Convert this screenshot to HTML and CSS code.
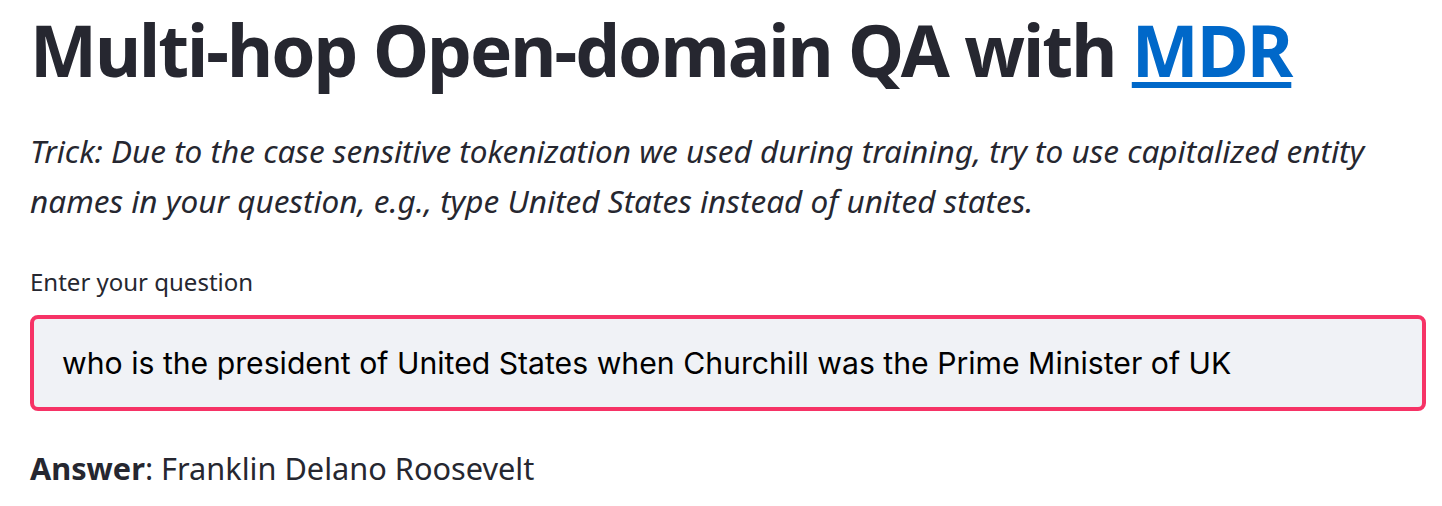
FILE: index.html
```html
<!DOCTYPE html>
<html>
<head>
<meta charset="utf-8">
<link rel="stylesheet" href="styles.css">
</head>
<body>
<main class="main">
  <h1 class="title">Multi-hop Open-domain QA with <a class="title-link" href="#">MDR</a></h1>
  <p class="tip">Trick: Due to the case sensitive tokenization we used during training, try to use capitalized entity names in your question, e.g., type United States instead of united states.</p>
  <div class="field">
    <label class="field-label">Enter your question</label>
    <div class="field-input">who is the president of United States when Churchill was the Prime Minister of UK</div>
  </div>
  <p class="answer"><strong class="answer-key">Answer</strong>: Franklin Delano Roosevelt</p>
</main>
</body>
</html>
```
FILE: styles.css
```css
html, body {
  margin: 0;
  padding: 0;
  background: #ffffff;
}
body {
  font-family: "Noto Sans", "Open Sans", sans-serif;
  color: #262730;
}
.main {
  padding: 7px 16px 0 30px;
  display: flex;
  flex-direction: column;
}
.title {
  margin: 0;
  font-size: 71px;
  font-weight: 700;
  line-height: 86px;
  letter-spacing: -2px;
  color: #262730;
}
.title-link {
  color: #0068c9;
  text-decoration: underline;
  text-decoration-thickness: 6px;
  text-underline-offset: 5px;
}
.tip {
  margin: 33px 0 0 0;
  font-size: 31.5px;
  line-height: 50px;
  font-style: italic;
  width: 1380px;
}
.field {
  margin-top: 40px;
  display: flex;
  flex-direction: column;
}
.field-label {
  font-size: 24px;
  line-height: 32px;
  color: #262730;
}
.field-input {
  margin-top: 17px;
  box-sizing: border-box;
  width: 1396px;
  height: 96px;
  border: 4px solid #f63366;
  border-radius: 8px;
  background: #f0f2f6;
  padding: 0 28px;
  display: flex;
  align-items: center;
  font-family: "Inter", "Liberation Sans", sans-serif;
  font-size: 30.2px;
  color: #000000;
}
.answer {
  margin: 33px 0 0 0;
  font-size: 30.7px;
  line-height: 48px;
}
.answer-key {
  font-weight: 700;
}
```
